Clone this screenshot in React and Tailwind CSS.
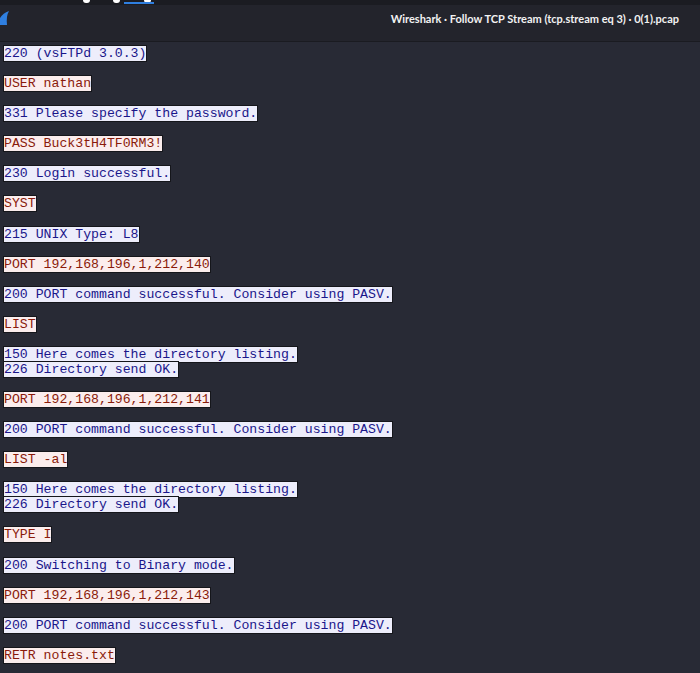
import React from 'react';

// Follow TCP Stream contents: s = server, c = client
const blocks = [
    { who: 's', lines: ['220 (vsFTPd 3.0.3)'] },
    { who: 'c', lines: ['USER nathan'] },
    { who: 's', lines: ['331 Please specify the password.'] },
    { who: 'c', lines: ['PASS Buck3tH4TF0RM3!'] },
    { who: 's', lines: ['230 Login successful.'] },
    { who: 'c', lines: ['SYST'] },
    { who: 's', lines: ['215 UNIX Type: L8'] },
    { who: 'c', lines: ['PORT 192,168,196,1,212,140'] },
    { who: 's', lines: ['200 PORT command successful. Consider using PASV.'] },
    { who: 'c', lines: ['LIST'] },
    { who: 's', lines: ['150 Here comes the directory listing.', '226 Directory send OK.'] },
    { who: 'c', lines: ['PORT 192,168,196,1,212,141'] },
    { who: 's', lines: ['200 PORT command successful. Consider using PASV.'] },
    { who: 'c', lines: ['LIST -al'] },
    { who: 's', lines: ['150 Here comes the directory listing.', '226 Directory send OK.'] },
    { who: 'c', lines: ['TYPE I'] },
    { who: 's', lines: ['200 Switching to Binary mode.'] },
    { who: 'c', lines: ['PORT 192,168,196,1,212,143'] },
    { who: 's', lines: ['200 PORT command successful. Consider using PASV.'] },
    { who: 'c', lines: ['RETR notes.txt'] },
];

const SharkFin = () => (
    <svg width="9" height="14" viewBox="0 0 9 14">
        <path d="M0 14 L0 7 Q3 2 9 0 Q6 5 7 14 Z" fill="#2f7fe0" />
    </svg>
);

const StreamLine = ({ text, who }) => (
    <div className="h-[15px] leading-[15px]">
        <span
            className={`inline-block h-[15px] whitespace-pre outline outline-1 outline-[#15161b] ${
                who === 's' ? 'bg-[#ededfb] text-[#1a168a]' : 'bg-[#fbeded] text-[#8a1a0a]'
            }`}
        >
            {text}
        </span>
    </div>
);

export default function App() {
    return (
        <div className="w-[700px] h-[673px] overflow-hidden flex flex-col bg-[#282a35]">
            {/* top strip, cut from the window above */}
            <div className="h-[5px] bg-[#1b1c22] relative shrink-0">
                <div className="absolute left-[83px] -top-[3px] w-[7px] h-[6px] rounded-full bg-white" />
                <div className="absolute left-[113px] -top-[3px] w-[7px] h-[6px] rounded-full bg-white" />
                <div className="absolute left-[144px] -top-[3px] w-[7px] h-[6px] rounded-full bg-white" />
                <div className="absolute left-[124px] top-[2px] w-[30px] h-[2px] bg-[#2f7fe0]" />
            </div>

            {/* title bar */}
            <div className="h-[37px] shrink-0 bg-[#23242c] border-b border-[#1a1b21] flex items-center justify-between">
                <div className="self-start mt-[6px]">
                    <SharkFin />
                </div>
                <div
                    className="pr-[21px] -mt-[8px] text-[11px] font-bold text-[#f2f2f2]"
                    style={{ fontFamily: 'Lato, "Open Sans", sans-serif' }}
                >
                    Wireshark · Follow TCP Stream (tcp.stream eq 3) · 0(1).pcap
                </div>
            </div>

            {/* stream text */}
            <div
                className="flex-1 pl-[4px] pt-[4px] text-[13.2px] text-black"
                style={{ fontFamily: '"Liberation Mono", "DejaVu Sans Mono", monospace' }}
            >
                {blocks.map((b, i) => (
                    <div key={i} className="mb-[15.1px]">
                        {b.lines.map((l, j) => (
                            <StreamLine key={j} text={l} who={b.who} />
                        ))}
                    </div>
                ))}
            </div>

            <div className="h-[3px] shrink-0 bg-[#1c1d23] border-t border-[#3a3c46]" />
        </div>
    );
}
